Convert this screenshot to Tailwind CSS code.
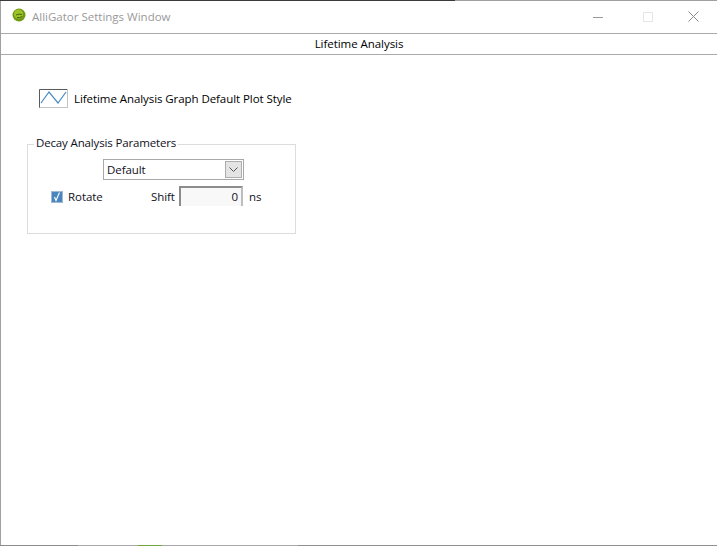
<!DOCTYPE html>
<html lang="en">
<head>
    <meta charset="UTF-8">
    <title>AlliGator Settings Window</title>
    <script src="https://cdn.jsdelivr.net/npm/@tailwindcss/browser@4"></script>
</head>
<body class="bg-white h-[546px] w-[717px] overflow-hidden font-['Open_Sans','Noto_Sans',sans-serif] text-[11.5px] text-[#10101c]">
    <div class="h-[546px] flex flex-col">
        <!-- window edge, top -->
        <div class="h-[1px] flex shrink-0">
            <div class="w-[455px] bg-[#3a3a3a]"></div>
            <div class="flex-1 bg-[#a0a0a0]"></div>
        </div>
        <div class="flex-1 flex flex-col border-l border-l-[#a0a0a0]">
            <!-- title bar -->
            <div class="h-[33px] flex items-center border-b border-[#aaa] shrink-0">
                <svg class="ml-[11px] w-[14px] h-[14px] mb-[4px]" viewBox="0 0 14 14">
                    <circle cx="7" cy="7" r="6.5" fill="#6f9a12"/>
                    <circle cx="6.5" cy="6" r="4.5" fill="#9cc428"/>
                    <path d="M4 7 Q7 5.5 10 6.5 M5 9.5 Q8 10 10 8.5" stroke="#46660f" stroke-width="1" fill="none"/>
                </svg>
                <span class="ml-[6px] text-[#9a9a9a]">AlliGator Settings Window</span>
                <div class="ml-auto flex items-center mb-[1px]">
                    <svg class="w-[10px] h-[10px] mr-[40px]" viewBox="0 0 10 10"><path d="M0 5.5H10" stroke="#999" stroke-width="1"/></svg>
                    <svg class="w-[10px] h-[10px] mr-[35px]" viewBox="0 0 10 10"><rect x="0.5" y="0.5" width="9" height="9" fill="none" stroke="#e6e6e6"/></svg>
                    <svg class="w-[11px] h-[11px] mr-[18px]" viewBox="0 0 11 11"><path d="M0.5 0.5L10.5 10.5M10.5 0.5L0.5 10.5" stroke="#8a8a8a" stroke-width="1"/></svg>
                </div>
            </div>
            <!-- tab header -->
            <div class="h-[21px] flex items-center justify-center border-b border-[#aaa] shrink-0 text-black tracking-[-0.05px]">Lifetime Analysis</div>
            <!-- panel -->
            <div class="flex-1 pl-[26px] pt-[34px] tracking-[-0.07px]">
                <div class="flex items-center pl-[12px] h-[19px]">
                    <svg class="w-[29px] h-[19px]" viewBox="0 0 29 19">
                        <rect x="0.5" y="0.5" width="28" height="18" fill="#fff" stroke="#c4c4c4"/>
                        <path d="M0.5 18.5V0.5H28" fill="none" stroke="#5a5a5a"/>
                        <path d="M2 14L10 3L19 14L27 3" fill="none" stroke="#4a8ac4" stroke-width="1.2"/>
                    </svg>
                    <span class="ml-[6px] text-black">Lifetime Analysis Graph Default Plot Style</span>
                </div>
                <div class="relative mt-[36px] w-[269px] h-[90px] border border-[#dcdcdc]">
                    <span class="absolute left-[6px] top-[-11px] bg-white px-[2px] leading-[18px] tracking-[-0.15px]">Decay Analysis Parameters</span>
                    <div class="flex pt-[14px] pl-[75px]">
                        <div class="w-[141px] h-[21px] border border-[#a8a8a8] flex items-center justify-between pl-[3px] pr-[1px]">
                            <span>Default</span>
                            <div class="w-[17px] h-[17px] bg-[#e4e4e4] border border-[#adadad] flex items-center justify-center">
                                <svg class="w-[9px] h-[6px]" viewBox="0 0 9 6"><path d="M0.5 0.5L4.5 4.5L8.5 0.5" fill="none" stroke="#555"/></svg>
                            </div>
                        </div>
                    </div>
                    <div class="flex items-center pl-[23px] mt-[6px] h-[20px]">
                        <div class="w-[12px] h-[12px] mt-[2px] bg-[#4a86bd] border border-[#9fb9d3] flex items-center justify-center">
                            <svg class="w-[10px] h-[10px]" viewBox="0 0 10 10"><path d="M2.5 5L4 8.5L7.5 0.5" fill="none" stroke="#fff" stroke-width="1.1"/></svg>
                        </div>
                        <span class="ml-[5px] mt-[2px] w-[83px]">Rotate</span>
                        <span class="w-[24px] mt-[2px]">Shift</span>
                        <div class="ml-[4px] w-[64px] h-[20px] bg-[#f8f8f8] border-t-2 border-x-2 border-t-[#8c8c8c] border-r-[#bdbdbd] border-l-[#8c8c8c] text-right pr-[3px] leading-[18px]">0</div>
                        <span class="ml-[6px] mt-[2px]">ns</span>
                    </div>
                </div>
            </div>
        </div>
        <!-- window edge, bottom -->
        <div class="h-[1px] flex shrink-0">
            <div class="w-[78px] bg-[#8c8c8c]"></div>
            <div class="w-[60px] bg-[#a8a8a8]"></div>
            <div class="w-[24px] bg-[#6fa53a]"></div>
            <div class="w-[136px] bg-[#a8a8a8]"></div>
            <div class="flex-1 bg-[#909090]"></div>
        </div>
    </div>
</body>
</html>
